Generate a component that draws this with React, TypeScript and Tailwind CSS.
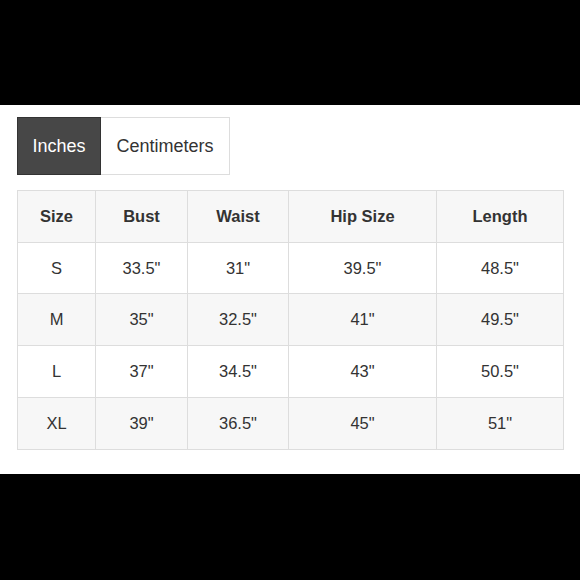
import React from 'react';

const columns = [
  { key: 'size', header: 'Size', width: 'w-[78px]' },
  { key: 'bust', header: 'Bust', width: 'w-[92px]' },
  { key: 'waist', header: 'Waist', width: 'w-[101px]' },
  { key: 'hip', header: 'Hip Size', width: 'w-[148px]' },
  { key: 'length', header: 'Length', width: 'w-[127px]' },
] as const;

const rows = [
  { size: 'S', bust: '33.5"', waist: '31"', hip: '39.5"', length: '48.5"' },
  { size: 'M', bust: '35"', waist: '32.5"', hip: '41"', length: '49.5"' },
  { size: 'L', bust: '37"', waist: '34.5"', hip: '43"', length: '50.5"' },
  { size: 'XL', bust: '39"', waist: '36.5"', hip: '45"', length: '51"' },
];

export default function App() {
  return (
    <div className="flex h-[580px] w-[580px] flex-col bg-black font-['Liberation_Sans',Arial,sans-serif] text-[#333]">
      <div className="h-[105px]" />
      <div className="flex h-[369px] flex-col bg-white px-[17px] pt-[12px]">
        <div className="flex">
          <button className="h-[58px] w-[84px] border border-[#333] bg-[#474747] text-[18px] text-white">
            Inches
          </button>
          <button className="h-[58px] w-[129px] border border-l-0 border-[#ddd] bg-white text-[18px] text-[#333]">
            Centimeters
          </button>
        </div>
        <table className="mt-[15px] w-[546px] table-fixed border-collapse border border-[#ddd] text-[16.5px]">
          <thead>
            <tr className="h-[52px] bg-[#f7f7f7]">
              {columns.map((col) => (
                <th key={col.key} className={`${col.width} border border-[#ddd] font-bold`}>
                  {col.header}
                </th>
              ))}
            </tr>
          </thead>
          <tbody>
            {rows.map((row, i) => (
              <tr key={row.size} className={`${i === 0 ? 'h-[51px]' : 'h-[52px]'} ${i % 2 === 1 ? 'bg-[#f7f7f7]' : 'bg-white'}`}>
                {columns.map((col) => (
                  <td key={col.key} className="border border-[#ddd] text-center">
                    {row[col.key]}
                  </td>
                ))}
              </tr>
            ))}
          </tbody>
        </table>
      </div>
    </div>
  );
}
